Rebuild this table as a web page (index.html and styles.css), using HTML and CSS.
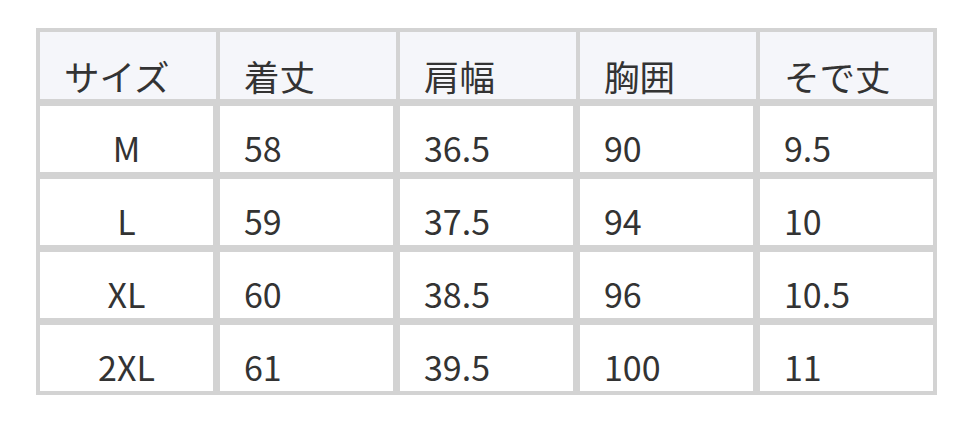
FILE: index.html
```html
<!DOCTYPE html>
<html lang="ja">
<head>
<meta charset="utf-8">
<link rel="stylesheet" href="styles.css">
</head>
<body>
<div class="size-table">
  <div class="cell head first">サイズ</div>
  <div class="cell head">着丈</div>
  <div class="cell head">肩幅</div>
  <div class="cell head">胸囲</div>
  <div class="cell head last">そで丈</div>

  <div class="cell size">M</div>
  <div class="cell">58</div>
  <div class="cell">36.5</div>
  <div class="cell">90</div>
  <div class="cell">9.5</div>

  <div class="cell size">L</div>
  <div class="cell">59</div>
  <div class="cell">37.5</div>
  <div class="cell">94</div>
  <div class="cell">10</div>

  <div class="cell size">XL</div>
  <div class="cell">60</div>
  <div class="cell">38.5</div>
  <div class="cell">96</div>
  <div class="cell">10.5</div>

  <div class="cell size">2XL</div>
  <div class="cell">61</div>
  <div class="cell">39.5</div>
  <div class="cell">100</div>
  <div class="cell">11</div>
</div>
</body>
</html>
```

FILE: styles.css
```css
html, body {
  margin: 0;
  padding: 0;
  background: #ffffff;
}
body {
  padding: 28px 0 0 36px;
  font-family: "Noto Sans CJK JP", "Noto Sans", sans-serif;
  font-weight: 400;
  color: #333333;
}
.size-table {
  display: grid;
  grid-template-columns: repeat(5, 173px);
  grid-template-rows: 67px repeat(4, 66px);
  column-gap: 7px;
  row-gap: 7px;
  width: 893px;
  border: 4px solid #d3d3d3;
  background: #d3d3d3;
}
.cell {
  background: #ffffff;
  display: flex;
  align-items: flex-end;
  padding: 0 24px 4px;
  font-size: 34px;
  line-height: 40px;
  white-space: nowrap;
}
.head {
  background: #f5f6fa;
  margin-right: -3px;
  font-size: 35.5px;
  padding-bottom: 3px;
}
.head.last {
  margin-right: 0;
}
.size {
  justify-content: center;
}
```
